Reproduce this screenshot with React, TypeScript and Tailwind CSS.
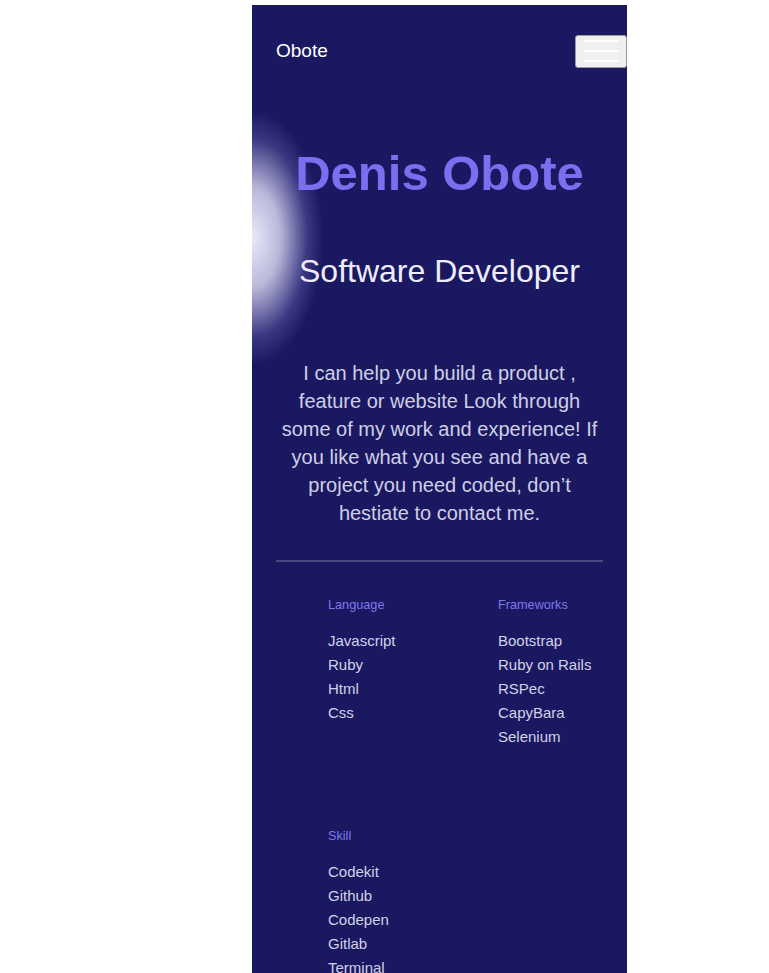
import React from 'react';

const languages = ['Javascript', 'Ruby', 'Html', 'Css'];
const frameworks = ['Bootstrap', 'Ruby on Rails', 'RSPec', 'CapyBara', 'Selenium'];
const skills = ['Codekit', 'Github', 'Codepen', 'Gitlab', 'Terminal'];

const List = ({ title, items }: { title: string; items: string[] }) => (
  <div>
    <h3 className="text-[12.7px] leading-[16px] text-[#7f77ec]">{title}</h3>
    <ul className="mt-[16px] text-[15px] leading-[24px] text-[#d2d2e6]">
      {items.map((item) => (
        <li key={item}>{item}</li>
      ))}
    </ul>
  </div>
);

export default function App() {
  return (
    <div className="min-h-screen bg-white pt-[5px] font-['Liberation_Sans',Arial,sans-serif]">
      <div className="relative ml-[252px] w-[375px] overflow-hidden bg-[#1b1862] pb-[40px]">
        {/* glow on the left edge */}
        <div className="pointer-events-none absolute left-[-70px] top-[108px] h-[250px] w-[140px] rounded-full bg-[radial-gradient(ellipse_at_center,rgba(240,240,255,0.97)_0%,rgba(225,225,248,0.8)_28%,rgba(120,115,190,0.35)_56%,rgba(27,24,98,0)_72%)]" />

        {/* Navbar */}
        <header className="relative flex h-[92px] items-center justify-between pl-6 pr-0">
          <span className="text-[19px] text-white">Obote</span>
          <button className="flex h-[33px] w-[52px] flex-col items-center justify-center gap-[8px] rounded-[3px] border border-[#9a9a9a] bg-[#efefef]">
            <span className="block h-[2px] w-[34px] bg-white" />
            <span className="block h-[2px] w-[34px] bg-white" />
            <span className="block h-[2px] w-[34px] bg-white" />
          </button>
        </header>

        {/* Hero */}
        <section className="relative px-6 text-center">
          <h1 className="mt-[48px] text-[49px] font-bold leading-[56px] text-[#7b6ff0]">Denis Obote</h1>
          <h2 className="mt-[50px] text-[32px] leading-[40px] text-[#ececfb]">Software Developer</h2>
          <p className="mt-[68px] text-[20px] leading-[28px] text-[#cfcfe4]">
            I can help you build a product , feature or website Look through some of my work and experience! If you like what you see and have a project you need coded, don’t hestiate to contact me.
          </p>
          <hr className="mt-[33px] border-t-[2px] border-[#4a4880]" />
        </section>

        {/* Skills */}
        <section className="relative mt-[35px] pl-[76px]">
          <div className="flex">
            <div className="w-[170px]">
              <List title="Language" items={languages} />
            </div>
            <List title="Frameworks" items={frameworks} />
          </div>
          <div className="mt-[79px]">
            <List title="Skill" items={skills} />
          </div>
        </section>
      </div>
    </div>
  );
}
